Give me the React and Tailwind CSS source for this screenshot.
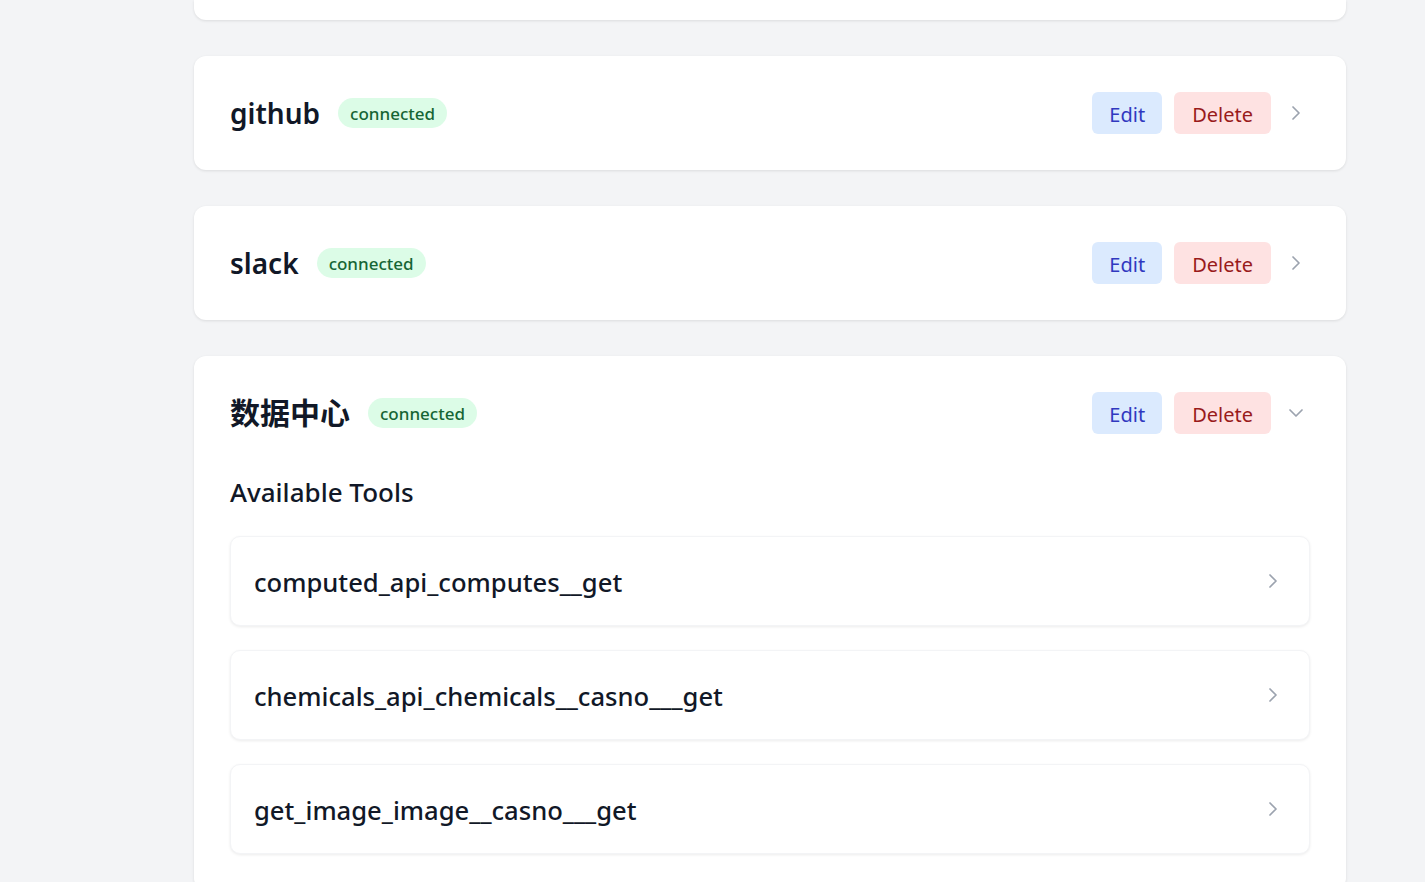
import React from "react";

const font = { fontFamily: '"Noto Sans", "Noto Sans CJK SC", sans-serif' };

function ChevronRight({ className = "" }) {
  return (
    <svg className={className} width="24" height="24" viewBox="0 0 24 24" fill="none" stroke="currentColor" strokeWidth="1.75" strokeLinecap="round" strokeLinejoin="round">
      <path d="m9 18 6-6-6-6" />
    </svg>
  );
}
function ChevronDown({ className = "" }) {
  return (
    <svg className={className} width="24" height="24" viewBox="0 0 24 24" fill="none" stroke="currentColor" strokeWidth="1.75" strokeLinecap="round" strokeLinejoin="round">
      <path d="m6 9 6 6 6-6" />
    </svg>
  );
}

function Header({ name, open, cjk }) {
  return (
    <div className="flex items-center justify-between">
      <div className="flex items-center gap-[18px]">
        <h2
          className={
            "leading-[42px] text-[#111827] " +
            (cjk ? "text-[30px] font-bold" : "text-[28px] font-semibold")
          }
        >
          {name}
        </h2>
        <span className="rounded-full bg-[#dcfce7] px-[12px] pt-[1px] text-[17px] font-medium leading-[29px] text-[#166534]">connected</span>
      </div>
      <div className="flex items-center">
        <button className="h-[42px] rounded-[6px] bg-[#dbeafe] px-[17px] pt-[3px] text-[20px] text-[#3139c0]">Edit</button>
        <button className="ml-[12px] h-[42px] rounded-[6px] bg-[#fee2e2] px-[18px] pt-[3px] text-[20px] text-[#991b1b]">Delete</button>
        <span className="ml-[13px] mr-[2px] text-[#9ca3af]">
          {open ? <ChevronDown /> : <ChevronRight />}
        </span>
      </div>
    </div>
  );
}

function Tool({ name }) {
  return (
    <div className="flex items-center justify-between rounded-[10px] border border-[#f3f4f6] bg-white px-[23px] py-[23px] shadow-[0_1px_3px_rgba(0,0,0,0.08)]">
      <span className="pt-[3px] text-[25.6px] font-medium leading-[39px] text-[#111827]">{name}</span>
      <span className="mr-[1px]">
        <ChevronRight className="text-[#9ca3af]" />
      </span>
    </div>
  );
}

export default function App() {
  return (
    <div className="h-[882px] overflow-hidden bg-[#f3f4f6]" style={font}>
      <div className="ml-[194px] w-[1152px]">
        <div className="h-[20px] rounded-b-[12px] bg-white shadow-[0_1px_3px_rgba(0,0,0,0.1)]" />
        <div className="mt-[36px] rounded-[12px] bg-white p-[36px] shadow-[0_1px_3px_rgba(0,0,0,0.1)]">
          <Header name="github" />
        </div>
        <div className="mt-[36px] rounded-[12px] bg-white p-[36px] shadow-[0_1px_3px_rgba(0,0,0,0.1)]">
          <Header name="slack" />
        </div>
        <div className="mt-[36px] rounded-[12px] bg-white p-[36px] shadow-[0_1px_3px_rgba(0,0,0,0.1)]">
          <Header name="数据中心" open cjk />
          <h3 className="mt-[36px] pt-[2px] text-[26px] font-medium leading-[40px] text-[#111827]">Available Tools</h3>
          <div className="mt-[24px] flex flex-col gap-[24px]">
            <Tool name="computed_api_computes__get" />
            <Tool name="chemicals_api_chemicals__casno___get" />
            <Tool name="get_image_image__casno___get" />
          </div>
        </div>
      </div>
    </div>
  );
}
